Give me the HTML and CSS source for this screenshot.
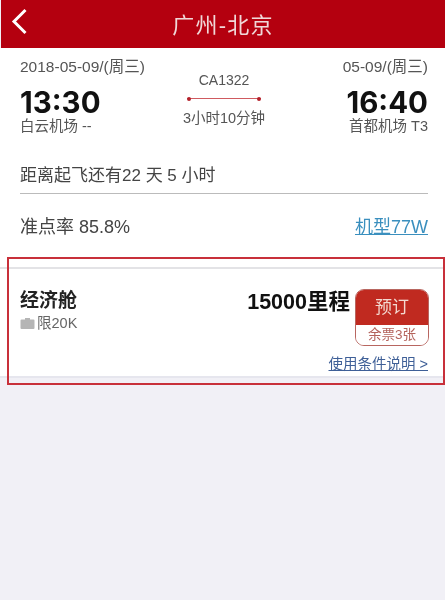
FILE: index.html
```html
<!DOCTYPE html>
<html lang="zh">
<head>
<meta charset="utf-8">
<title>广州-北京</title>
<link rel="stylesheet" href="styles.css">
</head>
<body>
<header class="nav">
  <svg class="back" width="18" height="28" viewBox="0 0 18 28"><path d="M14.500 2 3 13.500 14.500 25" fill="none" stroke="#fff" stroke-width="3"/></svg>
  <h1 class="title">广州-北京</h1>
</header>
<main class="sheet">
  <section class="flight">
    <div class="end">
      <div class="date">2018-05-09/(周三)</div>
      <div class="time">13:30</div>
      <div class="port">白云机场 --</div>
    </div>
    <div class="mid">
      <div class="no">CA1322</div>
      <div class="line"></div>
      <div class="dur">3小时10分钟</div>
    </div>
    <div class="end right">
      <div class="date">05-09/(周三)</div>
      <div class="time">16:40</div>
      <div class="port">首都机场 T3</div>
    </div>
  </section>
  <div class="count">距离起飞还有22 天 5 小时</div>
  <div class="rate-row">
    <span>准点率 85.8%</span>
    <a class="model">机型77W</a>
  </div>
</main>
<section class="cabin">
  <div class="cabin-main">
    <div>
      <div class="cabin-name">经济舱</div>
      <div class="bag">
        <svg width="15" height="12" viewBox="0 0 15 12"><path d="M5 2.500V1h5v1.500h3.500q1 0 1 1V11q0 1-1 1h-12q-1 0-1-1V3.500q0-1 1-1z" fill="#b5b5b5"/></svg>
        <span>限20K</span>
      </div>
    </div>
    <div class="price">15000里程</div>
    <div class="book">
      <div class="book-top">预订</div>
      <div class="book-bot">余票3张</div>
    </div>
  </div>
  <a class="terms">使用条件说明 &gt;</a>
</section>
<div class="mark"></div>
</body>
</html>
```
FILE: styles.css
```css
* { box-sizing: border-box; }
html, body { height: 100%; }
body {
  margin: 0;
  background: #f1f0f6;
  font-family: "Liberation Sans", "Noto Sans CJK SC", sans-serif;
  color: #333;
  position: relative;
  overflow: hidden;
  filter: blur(0.4px);
}
.nav {
  height: 48px;
  margin-left: 1px;
  background: #b4000f;
  display: flex;
  align-items: center;
  justify-content: center;
  position: relative;
}
.back { position: absolute; left: 10px; top: 8px; }
.title { margin: 0 0 3px; font-size: 22px; font-weight: 400; color: #f0d8d8; letter-spacing: 1.200px; }
.sheet { background: #fff; padding: 11px 17px 0 20px; height: 219px; }
.flight { display: flex; height: 83px; }
.end { flex: 1; display: flex; flex-direction: column; }
.right { align-items: flex-end; }
.date { font-size: 15.500px; line-height: 16px; color: #555; white-space: nowrap; }
.time { font-family: Inter, "Liberation Sans", sans-serif; font-size: 29.500px; font-weight: 700; line-height: 30px; margin-top: 12px; color: #111; }
.port { font-size: 14.500px; line-height: 18px; color: #555; }
.mid { width: 84px; display: flex; flex-direction: column; align-items: center; padding-top: 13px; }
.no { font-size: 14px; line-height: 16px; color: #555; }
.line {
  width: 74px; height: 1px; background: #cf5a60; margin-top: 10px; position: relative;
}
.line::before, .line::after {
  content: ""; position: absolute; top: -1.500px; width: 4px; height: 4px; border-radius: 50%; background: #b4202a;
}
.line::before { left: 0; }
.line::after { right: 0; }
.dur { font-size: 14.500px; line-height: 18px; color: #555; margin-top: 10px; white-space: nowrap; }
.count {
  font-size: 17px; line-height: 22px; color: #444; height: 35px; margin-top: 17px;
  padding-top: 6px; border-bottom: 1px solid #bbb;
}
.rate-row { display: flex; justify-content: space-between; font-size: 18px; line-height: 24px; color: #444; padding-top: 21px; }
.model { color: #3a8fbe; text-decoration: underline; }
.cabin {
  height: 111px;
  background: #fff;
  border-top: 2px solid #e3e3e6;
  border-bottom: 2px solid #e6e6ee;
  padding: 21px 17px 0 20px;
}
.cabin-main { display: flex; align-items: flex-start; }
.cabin-name { font-size: 19px; font-weight: 700; line-height: 22px; color: #222; }
.bag { display: flex; align-items: center; gap: 2px; font-size: 14.500px; line-height: 18px; color: #666; margin-top: 2px; }
.price { font-size: 21.500px; font-weight: 700; line-height: 24px; color: #111; margin-left: auto; margin-right: 5px; white-space: nowrap; }
.book { width: 74px; height: 57px; margin: -1px -1px 0 0; border: 1.500px solid #b86660; border-radius: 9px; overflow: hidden; text-align: center; }
.book-top { height: 35px; background: #c02a20; color: #f3d9d0; font-size: 17px; line-height: 35px; }
.book-bot { height: 20px; background: #fff; color: #b4635c; font-size: 13.500px; line-height: 19px; }
.terms { display: block; text-align: right; font-size: 14.500px; line-height: 18px; color: #3e5f97; text-decoration: underline; margin-top: 9px; }
.mark {
  position: absolute; left: 7px; top: 257px; width: 438px; height: 128px;
  border: 2px solid #c8303a; pointer-events: none;
}
```
